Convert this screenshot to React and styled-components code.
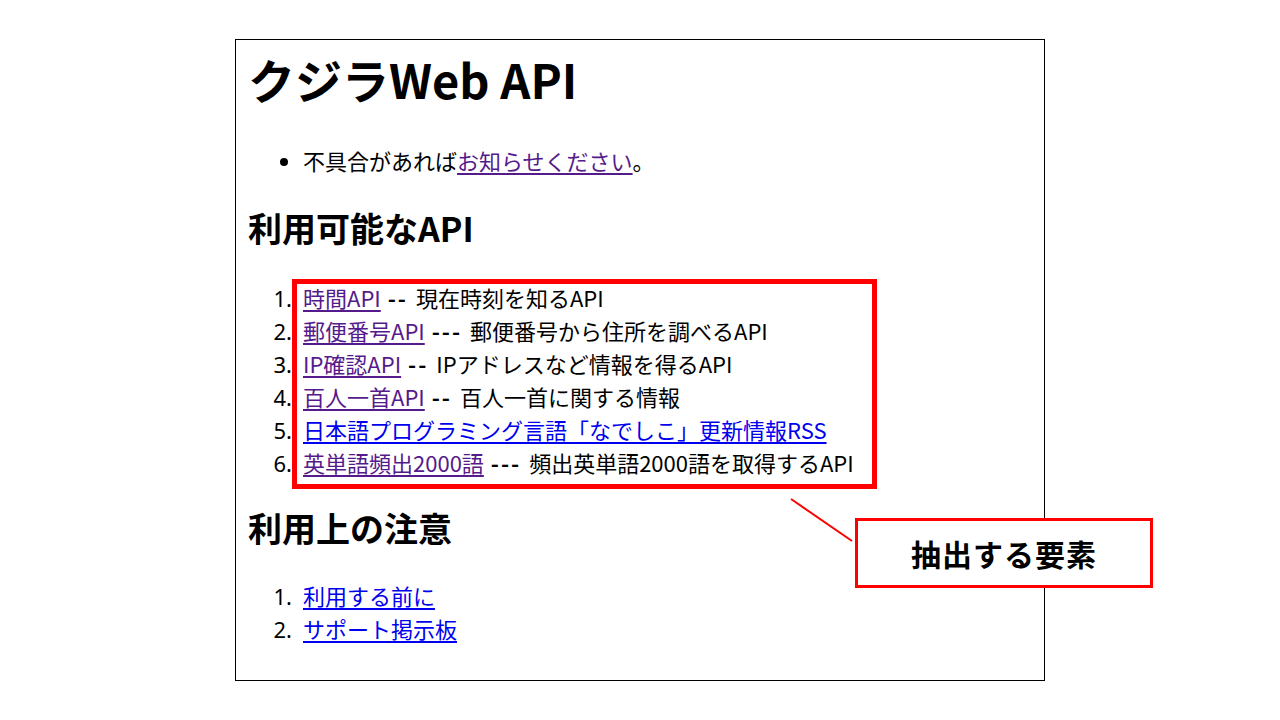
import React from "react";
import styled, {createGlobalStyle} from "styled-components";

const GlobalStyle = createGlobalStyle`
html, body {
    margin: 0;
    padding: 0;
    background: #fff;
}
body {
    font-family: "Noto Sans CJK JP", "Noto Sans", sans-serif;
    color: #000;
}
`;

const Slide = styled.div`
position: relative;
width: 1280px;
height: 720px;
overflow: hidden;
background: #fff;
padding: 39px 0 0 235px;
box-sizing: border-box;
`;

const PageShot = styled.div`
width: 810px;
height: 642px;
box-sizing: border-box;
border: 1px solid #000;
padding: 0 0 0 12px;
font-family: "Noto Sans CJK JP", sans-serif;
`;

const Title = styled.h1`
margin: 1px 0 0;
font-size: 47px;
line-height: 76px;
font-weight: 700;
`;

const Heading = styled.h2`
margin: ${p => p.$top}px 0 0;
font-size: 34px;
line-height: 50px;
font-weight: 700;
`;

const List = styled.ul`
margin: ${p => p.$top}px 0 0;
padding-left: 55px;
font-size: 22px;
line-height: 33px;
list-style-type: ${p => (p.$ordered ? "decimal" : "disc")};

& > li::marker {
    font-family: "Noto Sans", sans-serif;
    ${p => (p.$ordered ? "content: counter(list-item) \".\\2002\";" : "")}
}
`;

const Sep = styled.b`
font-weight: 700;
letter-spacing: 2px;
margin: 0 3px 0 2px;
`;

const Link = styled.a`
color: ${p => (p.$visited ? "#551a8b" : "#0000ee")};
text-decoration: underline;
text-underline-offset: 3px;
`;

const Highlight = styled.div`
position: absolute;
left: 292px;
top: 279px;
width: 585px;
height: 210px;
box-sizing: border-box;
border: 5px solid #ff0000;
`;

const Callout = styled.div`
position: absolute;
left: 855px;
top: 518px;
width: 298px;
height: 70px;
box-sizing: border-box;
border: 3px solid #ff0000;
background: #fff;
display: flex;
align-items: center;
justify-content: center;
font-size: 30px;
font-weight: 700;
letter-spacing: 1px;
`;

const Pointer = styled.svg`
position: absolute;
left: 0;
top: 0;
width: 1280px;
height: 720px;
pointer-events: none;
`;

const apis = [
    {name: "時間API", sep: "--", desc: "現在時刻を知るAPI", visited: true},
    {name: "郵便番号API", sep: "---", desc: "郵便番号から住所を調べるAPI", visited: true},
    {name: "IP確認API", sep: "--", desc: "IPアドレスなど情報を得るAPI", visited: true},
    {name: "百人一首API", sep: "--", desc: "百人一首に関する情報", visited: true},
    {name: "日本語プログラミング言語「なでしこ」更新情報RSS", sep: "", desc: "", visited: false},
    {name: "英単語頻出2000語", sep: "---", desc: "頻出英単語2000語を取得するAPI", visited: true},
];

const App = () => (
    <>
        <GlobalStyle />
        <Slide>
            <PageShot>
                <Title>クジラWeb API</Title>
                <List $top={27}>
                    <li>
                        不具合があれば<Link $visited href="#">お知らせください</Link>。
                    </li>
                </List>
                <Heading $top={26}>利用可能なAPI</Heading>
                <List as="ol" $ordered $top={28}>
                    {apis.map(api => (
                        <li key={api.name}>
                            <Link $visited={api.visited} href="#">{api.name}</Link>
                            {api.sep && (
                                <>
                                    {" "}<Sep>{api.sep}</Sep> {api.desc}
                                </>
                            )}
                        </li>
                    ))}
                </List>
                <Heading $top={24}>利用上の注意</Heading>
                <List as="ol" $ordered $top={26}>
                    <li><Link href="#">利用する前に</Link></li>
                    <li><Link href="#">サポート掲示板</Link></li>
                </List>
            </PageShot>
            <Highlight />
            <Pointer viewBox="0 0 1280 720">
                <line x1="791" y1="499" x2="852" y2="541" stroke="#ff0000" strokeWidth="2" />
            </Pointer>
            <Callout>抽出する要素</Callout>
        </Slide>
    </>
);

export default App;
